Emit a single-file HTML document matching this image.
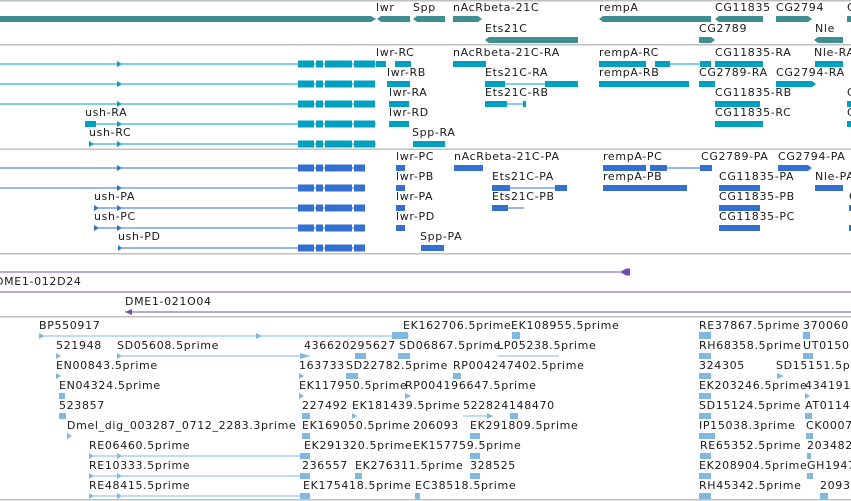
<!DOCTYPE html>
<html><head><meta charset="utf-8"><style>
body{margin:0;width:851px;height:501px;overflow:hidden;background:#fff;position:relative;font-family:"DejaVu Sans","Liberation Sans",sans-serif;}
.t{position:absolute;font-size:11px;line-height:12px;letter-spacing:0.65px;color:#1a1a1a;white-space:nowrap;}
svg{position:absolute;left:0;top:0;}
</style></head><body>
<svg width="851" height="501">
<g fill="#c0c0c0"><rect x="0" y="0" width="851" height="1.5"/><rect x="0" y="44" width="851" height="1.5"/><rect x="0" y="148.5" width="851" height="1.5"/><rect x="0" y="253" width="851" height="1.5"/><rect x="0" y="316" width="851" height="1.5"/><rect x="0" y="499" width="851" height="1.5"/></g>
<g fill="#3f8f91">
<path d="M0 16H371L376 19L371 22H0Z"/>
<path d="M377 19L381 16H410V22H381Z"/>
<path d="M413 19L417 16H445V22H417Z"/>
<path d="M453 16H478L482 19L478 22H453Z"/>
<path d="M599 19L603 16H711V22H603Z"/>
<path d="M715 19L719 16H763V22H719Z"/>
<path d="M776 16H808L812 19L808 22H776Z"/>
<rect x="847" y="16" width="4" height="6"/>
<path d="M485 40L489 37H578V43H489Z"/>
<path d="M699 37H711L715 40L711 43H699Z"/>
<path d="M814 40L818 37H843V43H818Z"/>
</g>
<g fill="#00a0c0" stroke="none">
<rect x="0" y="63.5" width="376" height="1"/><rect x="0" y="83.5" width="372" height="1"/><rect x="0" y="103.5" width="372" height="1"/><rect x="85" y="123.5" width="291" height="1"/><rect x="89" y="143.5" width="287" height="1"/>
<path d="M117 61L122 64L117 67Z M117 81L122 84L117 87Z M117 101L122 104L117 107Z M117 121L122 124L117 127Z M117 141L122 144L117 147Z M89 141L94 144L89 147Z"/>
<rect x="85" y="121" width="11" height="6"/>
<g id="ex"><rect x="298" y="60.5" width="16" height="7"/><rect x="316" y="60.5" width="7" height="7"/><rect x="325" y="60.5" width="27" height="7"/><rect x="354" y="60.5" width="21" height="7"/></g>
<use href="#ex" y="20"/><use href="#ex" y="40"/><use href="#ex" y="60"/><use href="#ex" y="80"/>
<rect x="376" y="61" width="10" height="6"/><rect x="395" y="61" width="16" height="6"/>
<rect x="387" y="81" width="23" height="6"/><rect x="389" y="101" width="20" height="6"/><rect x="389" y="121" width="20" height="6"/>
<rect x="413" y="141" width="32" height="6"/>
<rect x="453" y="61" width="33" height="6"/><rect x="599" y="61" width="47" height="6"/><rect x="655" y="61" width="15" height="6"/><rect x="670" y="63.5" width="30" height="1"/><rect x="700" y="61" width="11" height="6"/>
<rect x="715" y="61" width="48" height="6"/><rect x="815" y="61" width="28" height="6"/>
<rect x="485" y="81" width="20" height="6"/><rect x="505" y="83.5" width="40" height="1"/><rect x="545" y="81" width="33" height="6"/>
<rect x="599" y="81" width="90" height="6"/><rect x="699" y="81" width="16" height="6"/><path d="M776 81H812L816 84L812 87H776Z"/>
<rect x="485" y="101" width="22" height="6"/><rect x="507" y="103.5" width="18" height="1"/><rect x="523" y="101" width="3" height="6"/>
<rect x="715" y="101" width="45" height="6"/><rect x="715" y="121" width="48" height="6"/><rect x="847" y="101" width="4" height="6"/><rect x="847" y="121" width="4" height="6"/>
</g>
<g fill="#3370d0">
<rect x="0" y="167.5" width="365" height="1"/><rect x="0" y="187.5" width="365" height="1"/><rect x="94" y="207.5" width="271" height="1"/><rect x="94" y="227.5" width="271" height="1"/><rect x="118" y="247.5" width="247" height="1"/>
<path d="M117 165L122 168L117 171Z M117 185L122 188L117 191Z M117 205L122 208L117 211Z M117 225L122 228L117 231Z M94 205L99 208L94 211Z M94 225L99 228L94 231Z M118 245L122 248L118 251Z"/>
<g id="px"><rect x="298" y="164.5" width="16" height="7"/><rect x="316" y="164.5" width="7" height="7"/><rect x="325" y="164.5" width="27" height="7"/><rect x="354" y="164.5" width="11" height="7"/></g>
<use href="#px" y="20"/><use href="#px" y="40"/><use href="#px" y="60"/><use href="#px" y="80"/>
<rect x="396" y="165" width="9" height="6"/><rect x="396" y="185" width="9" height="6"/><rect x="396" y="205" width="9" height="6"/><rect x="396" y="225" width="9" height="6"/>
<rect x="421" y="245" width="23" height="6"/>
<rect x="454" y="165" width="29" height="6"/><rect x="603" y="165" width="43" height="6"/><rect x="650" y="165" width="17" height="6"/><rect x="667" y="167.5" width="33" height="1"/><rect x="700" y="165" width="12" height="6"/><path d="M778 165H808L812 168L808 171H778Z"/>
<rect x="492" y="185" width="18" height="6"/><rect x="510" y="187.5" width="45" height="1"/><rect x="555" y="185" width="12" height="6"/>
<rect x="603" y="185" width="84" height="6"/><rect x="719" y="185" width="41" height="6"/><rect x="815" y="185" width="28" height="6"/>
<rect x="492" y="205" width="16" height="6"/><rect x="508" y="207.5" width="16" height="1"/>
<rect x="719" y="205" width="41" height="6"/><rect x="719" y="225" width="41" height="6"/><rect x="849" y="205" width="2" height="6"/><rect x="849" y="225" width="2" height="6"/>
</g>
<g fill="#7050b0">
<rect x="0" y="271.5" width="626" height="1"/><path d="M620 272L626 268.5H630V275.5H626Z"/>
<rect x="0" y="291.5" width="851" height="1"/>
<rect x="125" y="311.5" width="726" height="1"/><path d="M125 312L132 309V315Z"/>
</g>
<g fill="#80b8e0">
<rect x="39" y="335.5" width="370" height="1"/><rect x="117" y="355.5" width="193" height="1"/><rect x="498" y="355.5" width="61" height="1"/><rect x="89" y="455.5" width="211" height="1"/><rect x="89" y="475.5" width="211" height="1"/><rect x="89" y="495.5" width="211" height="1"/><rect x="463" y="415.5" width="30" height="1"/>
<path d="M39 333L45 336L39 339Z M256 333L262 336L256 339Z M392 332H408V339H392Z M512 332H520V339H512Z M699 332H711V339H699Z M803 332H810V339H803Z
M56 353L61 356L56 359Z M117 353L122 356L117 359Z M300 353L310 356L300 359Z M355 353H366V359H355Z M398 353H410V359H398Z M699 353H711V359H699Z M803 353H813V359H803Z
M56 373L61 376L56 379Z M299 373L304 376L299 379Z M346 373H358V379H346Z M453 373H461V379H453Z M699 373H711V379H699Z M777 373L784 376L777 379Z
M59 393H65V399H59Z M299 393L304 396L299 399Z M405 393L411 396L405 399Z M699 393H711V399H699Z M805 393L810 396L805 399Z
M59 413H66V419H59Z M302 413H310V419H302Z M352 413L357 416L352 419Z M487 413L493 416L487 419Z M510 413H518V419H510Z M699 413H711V419H699Z M805 413H812V419H805Z
M67 433L72 436L67 439Z M302 433H310V439H302Z M470 433H480V439H470Z M699 433H715V439H699Z M806 433H813V439H806Z
M89 453L94 456L89 459Z M117 453L122 456L117 459Z M300 453H310V459H300Z M470 453H480V459H470Z M700 453H711V459H700Z M807 453H811V459H807Z
M89 473L94 476L89 479Z M117 473L122 476L117 479Z M300 473H310V479H300Z M355 473H362V479H355Z M470 473H480V479H470Z M699 473H711V479H699Z M807 473H813V479H807Z
M89 493L94 496L89 499Z M117 493L122 496L117 499Z M300 493H310V499H300Z M415 493H420V499H415Z M699 493H711V499H699Z M820 493H828V499H820Z"/>
</g>
</svg>
<div class="t" style="left:376px;top:2px">lwr</div><div class="t" style="left:413px;top:2px">Spp</div><div class="t" style="left:453px;top:2px">nAcRbeta-21C</div><div class="t" style="left:599px;top:2px">rempA</div><div class="t" style="left:715px;top:2px">CG11835</div><div class="t" style="left:776px;top:2px">CG2794</div><div class="t" style="left:847px;top:2px">C</div>
<div class="t" style="left:485px;top:23px">Ets21C</div><div class="t" style="left:699px;top:23px">CG2789</div><div class="t" style="left:815px;top:23px">Nle</div>
<div class="t" style="left:376px;top:47px">lwr-RC</div><div class="t" style="left:453px;top:47px">nAcRbeta-21C-RA</div><div class="t" style="left:599px;top:47px">rempA-RC</div><div class="t" style="left:715px;top:47px">CG11835-RA</div><div class="t" style="left:814px;top:47px">Nle-RA</div>
<div class="t" style="left:387px;top:67px">lwr-RB</div><div class="t" style="left:485px;top:67px">Ets21C-RA</div><div class="t" style="left:599px;top:67px">rempA-RB</div><div class="t" style="left:699px;top:67px">CG2789-RA</div><div class="t" style="left:776px;top:67px">CG2794-RA</div>
<div class="t" style="left:389px;top:87px">lwr-RA</div><div class="t" style="left:485px;top:87px">Ets21C-RB</div><div class="t" style="left:715px;top:87px">CG11835-RB</div><div class="t" style="left:847px;top:87px">C</div>
<div class="t" style="left:85px;top:107px">ush-RA</div><div class="t" style="left:389px;top:107px">lwr-RD</div><div class="t" style="left:715px;top:107px">CG11835-RC</div><div class="t" style="left:847px;top:107px">C</div>
<div class="t" style="left:89px;top:127px">ush-RC</div><div class="t" style="left:412px;top:127px">Spp-RA</div>
<div class="t" style="left:396px;top:151px">lwr-PC</div><div class="t" style="left:454px;top:151px">nAcRbeta-21C-PA</div><div class="t" style="left:603px;top:151px">rempA-PC</div><div class="t" style="left:701px;top:151px">CG2789-PA</div><div class="t" style="left:778px;top:151px">CG2794-PA</div>
<div class="t" style="left:396px;top:171px">lwr-PB</div><div class="t" style="left:492px;top:171px">Ets21C-PA</div><div class="t" style="left:603px;top:171px">rempA-PB</div><div class="t" style="left:719px;top:171px">CG11835-PA</div><div class="t" style="left:815px;top:171px">Nle-PA</div>
<div class="t" style="left:94px;top:191px">ush-PA</div><div class="t" style="left:396px;top:191px">lwr-PA</div><div class="t" style="left:492px;top:191px">Ets21C-PB</div><div class="t" style="left:719px;top:191px">CG11835-PB</div><div class="t" style="left:849px;top:191px">C</div>
<div class="t" style="left:94px;top:211px">ush-PC</div><div class="t" style="left:396px;top:211px">lwr-PD</div><div class="t" style="left:719px;top:211px">CG11835-PC</div>
<div class="t" style="left:118px;top:231px">ush-PD</div><div class="t" style="left:420px;top:231px">Spp-PA</div>
<div class="t" style="left:-5px;top:276px">DME1-012D24</div>
<div class="t" style="left:125px;top:296px">DME1-021O04</div>
<div class="t" style="left:39px;top:320px">BP550917</div><div class="t" style="left:403px;top:320px">EK162706.5prime</div><div class="t" style="left:511px;top:320px">EK108955.5prime</div><div class="t" style="left:699px;top:320px">RE37867.5prime</div><div class="t" style="left:803px;top:320px">370060</div>
<div class="t" style="left:56px;top:340px">521948</div><div class="t" style="left:117px;top:340px">SD05608.5prime</div><div class="t" style="left:304px;top:340px">436620295627</div><div class="t" style="left:399px;top:340px">SD06867.5prime</div><div class="t" style="left:497px;top:340px">LP05238.5prime</div><div class="t" style="left:699px;top:340px">RH68358.5prime</div><div class="t" style="left:803px;top:340px">UT0150</div>
<div class="t" style="left:56px;top:360px">EN00843.5prime</div><div class="t" style="left:299px;top:360px">163733</div><div class="t" style="left:346px;top:360px">SD22782.5prime</div><div class="t" style="left:453px;top:360px">RP004247402.5prime</div><div class="t" style="left:699px;top:360px">324305</div><div class="t" style="left:776px;top:360px">SD15151.5p</div>
<div class="t" style="left:59px;top:380px">EN04324.5prime</div><div class="t" style="left:299px;top:380px">EK117950.5prime</div><div class="t" style="left:405px;top:380px">RP004196647.5prime</div><div class="t" style="left:699px;top:380px">EK203246.5prime</div><div class="t" style="left:805px;top:380px">434191</div>
<div class="t" style="left:59px;top:400px">523857</div><div class="t" style="left:302px;top:400px">227492</div><div class="t" style="left:352px;top:400px">EK181439.5prime</div><div class="t" style="left:463px;top:400px">522824148470</div><div class="t" style="left:699px;top:400px">SD15124.5prime</div><div class="t" style="left:805px;top:400px">AT0114</div>
<div class="t" style="left:67px;top:420px">Dmel_dig_003287_0712_2283.3prime</div><div class="t" style="left:302px;top:420px">EK169050.5prime</div><div class="t" style="left:413px;top:420px">206093</div><div class="t" style="left:470px;top:420px">EK291809.5prime</div><div class="t" style="left:699px;top:420px">IP15038.3prime</div><div class="t" style="left:806px;top:420px">CK0007</div>
<div class="t" style="left:89px;top:440px">RE06460.5prime</div><div class="t" style="left:304px;top:440px">EK291320.5prime</div><div class="t" style="left:413px;top:440px">EK157759.5prime</div><div class="t" style="left:700px;top:440px">RE65352.5prime</div><div class="t" style="left:807px;top:440px">203482</div>
<div class="t" style="left:89px;top:460px">RE10333.5prime</div><div class="t" style="left:302px;top:460px">236557</div><div class="t" style="left:355px;top:460px">EK276311.5prime</div><div class="t" style="left:470px;top:460px">328525</div><div class="t" style="left:699px;top:460px">EK208904.5prime</div><div class="t" style="left:807px;top:460px">GH1947</div>
<div class="t" style="left:89px;top:480px">RE48415.5prime</div><div class="t" style="left:303px;top:480px">EK175418.5prime</div><div class="t" style="left:415px;top:480px">EC38518.5prime</div><div class="t" style="left:699px;top:480px">RH45342.5prime</div><div class="t" style="left:820px;top:480px">2093</div>
</body></html>
